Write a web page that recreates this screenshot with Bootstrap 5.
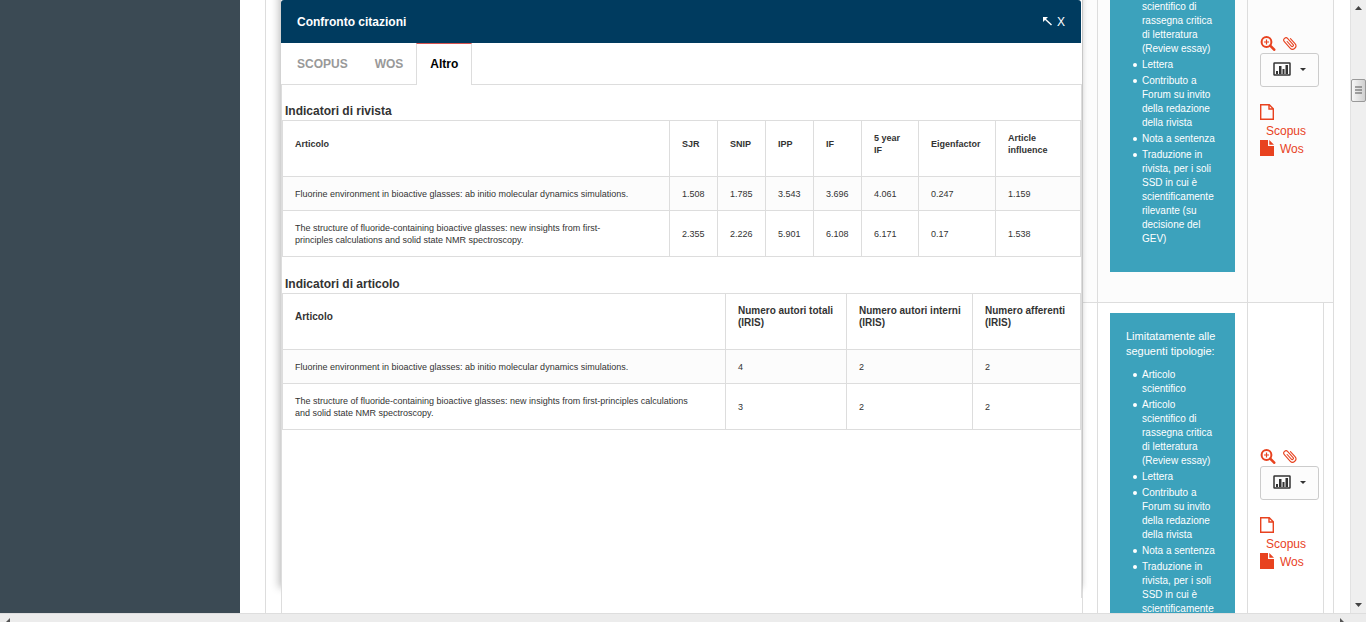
<!DOCTYPE html>
<html lang="it">
<head>
<meta charset="utf-8">
<meta name="viewport" content="width=device-width, initial-scale=1">
<title>Confronto citazioni</title>
<link href="https://cdn.jsdelivr.net/npm/bootstrap@5.3.0/dist/css/bootstrap.min.css" rel="stylesheet">
<script src="https://cdn.jsdelivr.net/npm/bootstrap@5.3.0/dist/js/bootstrap.bundle.min.js"></script>
<style>
  body { font-family: "Liberation Sans", Arial, sans-serif; font-size: 12px; line-height: 18px; color: #333; background: #fff; }
  .side-panel { width: 240px; background: #3b4a54; }
  .page-main { padding: 0 16px 0 25px; }

  /* results grid behind the dialog */
  .result { background: #fff; }
  .result > div { border-left: 1px solid #ddd; flex: none; }
  .result .c-check { width: 16px; }
  .result .c-item { flex: 1 1 0; }
  .result .c-gap { width: 15px; }
  .result .c-notes { width: 150px; padding: 10px 12px 0; }
  .result .c-actions { width: 87px; border-right: 1px solid #ddd; padding-left: 12px; }
  .result-first { height: 303px; }
  .result-first .c-gap, .result-first .c-notes, .result-first .c-actions { background: #fcfcfc; border-bottom: 1px solid #ddd; }
  .result-first .c-notes { padding: 0 12px 30px; }
  .result-first .c-actions { padding-top: 34px; }
  .result-next .c-actions { padding-right: 9px; }
  .result-next .inner { border-right: 1px solid #ddd; padding-top: 144px; }

  .note-box { background: #3ca2bc; color: #fff; font-size: 10px; line-height: 14px; padding: 16px; }
  .note-box p { margin: 0 -8px 9px 0; font-size: 11px; line-height: 15px; }
  .note-box ul { margin: 0; padding-left: 16px; list-style: none; }
  .note-box li { position: relative; margin-bottom: 2px; white-space: nowrap; }
  .note-box li:not(.continued)::before { content: ""; position: absolute; left: -9px; top: 5px; width: 4px; height: 4px; border-radius: 50%; background: #fff; }
  .result-first .note-box { padding-top: 0; padding-bottom: 24px; }

  .red-link { color: #e8421f; text-decoration: none; }
  .tool-icons { height: 18px; gap: 7px; margin-bottom: 1px; }
  .btn-chart { width: 59px; height: 34px; border: 1px solid #ccc; border-radius: 3px; background: #fcfcfc; color: #333; padding: 0 0 2px; gap: 9px; margin-bottom: 17px; }
  .ico { display: block; }
  .file-line { height: 18px; }
  .scopus-text { padding-left: 6px; }
  .wos-link { gap: 6px; }

  /* dialog */
  .cmp-dialog { top: 0; bottom: 15px; left: 41px; right: 268px; background: #fff; box-shadow: -3px -10px 8px rgba(0,0,0,.2), 1px -10px 6px rgba(0,0,0,.1); }
  .cmp-head { height: 43px; background: #003b5f; color: #fff; padding: 0 16px; margin-right: 1px; border-radius: 3px 3px 0 0; font-weight: bold; line-height: 16px; }
  .cmp-head button { background: none; border: 0; padding: 0; color: #fff; }
  .cmp-tabs { height: 42px; border-bottom: 1px solid #ddd; padding-left: 2px; margin: 0; }
  .cmp-tabs a { display: block; height: 42px; padding: 12px 13px 0 14px; font-weight: bold; color: #999; text-decoration: none; }
  .cmp-tabs a.active { border: 1px solid #ddd; border-top-color: #d9534f; border-bottom: 0; padding: 11px 13px 0; color: #000; background: #fff; }
  .cmp-body { border: solid #ddd; border-width: 0 1px; padding-top: 17px; height: calc(100% - 85px); }
  .cmp-body h2 { font-size: 12px; line-height: 18px; font-weight: bold; margin: 0; padding-left: 3px; }
  .metrics { width: 100%; table-layout: fixed; border-collapse: collapse; margin-bottom: 17px; font-size: 9px; line-height: 12px; }
  .metrics th, .metrics td { border: 1px solid #ddd; padding: 11px 11px 10px 12px; vertical-align: middle; }
  .metrics th { padding: 11px 0 20px 12px; }
  .metrics tbody tr:first-child { background: #fcfcfc; }
  .journal-metrics { margin-bottom: 18px; }
  .article-metrics th { font-size: 10px; line-height: 12px; }
  .w48 { width: 48px; } .w57 { width: 57px; } .w77 { width: 77px; } .w85 { width: 85px; }
  .w121 { width: 121px; } .w126 { width: 126px; } .w108 { width: 108px; }

  .v-bar { width: 16px; background: #efefef; border-left: 1px solid #e2e2e2; padding: 6px 0; }
  .v-thumb { width: 15px; height: 23px; top: 79px; left: 0; border: 1px solid #999; border-radius: 2px; background: linear-gradient(90deg,#f7f7f7,#cfcfcf); }
  .h-bar { height: 9px; background: #ececec; border-top: 1px solid #dedede; padding: 4px 22px 0 6px; }
</style>
</head>
<body>
<svg width="0" height="0" class="position-absolute" aria-hidden="true">
  <symbol id="zoom" viewBox="0 0 15 15"><circle cx="6" cy="6" r="4.9" fill="none" stroke="currentColor" stroke-width="2"/><path d="M6 3.5v5M3.5 6h5" stroke="currentColor" stroke-width="1.2"/><path d="M9.700 9.700l4 4" stroke="currentColor" stroke-width="2.600" stroke-linecap="round"/></symbol>
  <symbol id="clip" viewBox="0 0 14 14"><path d="M10.300 4v6.800a3.300 3.300 0 0 1-6.600 0V2.200a2.300 2.300 0 0 1 4.600 0v8a1.200 1.200 0 0 1-2.400 0V4" transform="rotate(-42 7 7)" fill="none" stroke="currentColor" stroke-width="1.100" stroke-linecap="round"/></symbol>
  <symbol id="chart" viewBox="0 0 18 14"><rect x="1" y="1" width="16" height="12" rx=".5" fill="none" stroke="currentColor" stroke-width="1.500"/><path d="M3 9h2v3H3zM6 4h2.500v8H6zM9.500 7h2v5h-2zM12.500 3H15v9h-2.500z" fill="currentColor"/></symbol>
  <symbol id="file-o" viewBox="0 0 14 16"><path d="M.7.7h8.600l4 4v10.600H.7zM9 1v4h4" fill="none" stroke="currentColor" stroke-width="1.400"/></symbol>
  <symbol id="file" viewBox="0 0 14 16"><path d="M0 0h8v6h6v10H0zM9.300 0L14 4.700H9.300z" fill="currentColor"/></symbol>
</svg>

<div class="d-flex flex-column vh-100 overflow-hidden">
  <div class="d-flex flex-fill overflow-hidden">
    <aside class="side-panel flex-shrink-0"></aside>

    <main class="page-main position-relative flex-fill overflow-hidden d-flex flex-column">
      <section class="result result-first d-flex flex-shrink-0">
        <div class="c-check"></div><div class="c-item"></div><div class="c-gap"></div>
        <div class="c-notes d-flex flex-column">
          <div class="note-box flex-fill d-flex flex-column justify-content-end">
            <ul>
              <li class="continued">scientifico di<br>rassegna critica<br>di letteratura<br>(Review essay)</li>
              <li>Lettera</li>
              <li>Contributo a<br>Forum su invito<br>della redazione<br>della rivista</li>
              <li>Nota a sentenza</li>
              <li>Traduzione in<br>rivista, per i soli<br>SSD in cui è<br>scientificamente<br>rilevante (su<br>decisione del<br>GEV)</li>
            </ul>
          </div>
        </div>
        <div class="c-actions">
          <div class="tool-icons d-flex align-items-center">
            <a href="#" class="red-link" aria-label="Dettagli"><svg class="ico" width="16" height="15"><use href="#zoom"/></svg></a>
            <a href="#" class="red-link" aria-label="Allegati"><svg class="ico" width="14" height="14"><use href="#clip"/></svg></a>
          </div>
          <button type="button" class="btn-chart d-flex align-items-center justify-content-center" aria-label="Statistiche"><svg width="18" height="14"><use href="#chart"/></svg><svg width="6" height="3"><path d="M0 0h6L3 3z" fill="currentColor"/></svg></button>
          <a href="#" class="red-link d-block"><span class="file-line d-block"><svg class="ico" width="14" height="16"><use href="#file-o"/></svg></span><span class="scopus-text d-block">Scopus</span></a>
          <a href="#" class="red-link wos-link d-flex"><svg width="14" height="16"><use href="#file"/></svg><span>Wos</span></a>
        </div>
      </section>

      <section class="result result-next d-flex flex-fill">
        <div class="c-check"></div><div class="c-item"></div><div class="c-gap"></div>
        <div class="c-notes">
          <div class="note-box">
            <p>Limitatamente alle<br>seguenti tipologie:</p>
            <ul>
              <li>Articolo<br>scientifico</li>
              <li>Articolo<br>scientifico di<br>rassegna critica<br>di letteratura<br>(Review essay)</li>
              <li>Lettera</li>
              <li>Contributo a<br>Forum su invito<br>della redazione<br>della rivista</li>
              <li>Nota a sentenza</li>
              <li>Traduzione in<br>rivista, per i soli<br>SSD in cui è<br>scientificamente</li>
            </ul>
          </div>
        </div>
        <div class="c-actions">
          <div class="inner h-100">
            <div class="tool-icons d-flex align-items-center">
              <a href="#" class="red-link" aria-label="Dettagli"><svg class="ico" width="16" height="15"><use href="#zoom"/></svg></a>
              <a href="#" class="red-link" aria-label="Allegati"><svg class="ico" width="14" height="14"><use href="#clip"/></svg></a>
            </div>
            <button type="button" class="btn-chart d-flex align-items-center justify-content-center" aria-label="Statistiche"><svg width="18" height="14"><use href="#chart"/></svg><svg width="6" height="3"><path d="M0 0h6L3 3z" fill="currentColor"/></svg></button>
            <a href="#" class="red-link d-block"><span class="file-line d-block"><svg class="ico" width="14" height="16"><use href="#file-o"/></svg></span><span class="scopus-text d-block">Scopus</span></a>
            <a href="#" class="red-link wos-link d-flex"><svg width="14" height="16"><use href="#file"/></svg><span>Wos</span></a>
          </div>
        </div>
      </section>

      <div class="cmp-dialog position-absolute" role="dialog" aria-labelledby="cmp-title">
        <header class="cmp-head d-flex align-items-center justify-content-between">
          <span id="cmp-title">Confronto citazioni</span>
          <span class="d-flex align-items-center gap-1">
            <button type="button" aria-label="Riduci"><svg class="ico" width="11" height="11" viewBox="0 0 11 11"><path d="M1 1h5L1 6z" fill="currentColor"/><path d="M2 2l7.500 7" fill="none" stroke="currentColor" stroke-width="1.400"/></svg></button>
            <button type="button">X</button>
          </span>
        </header>
        <ul class="cmp-tabs d-flex list-unstyled">
          <li><a href="#">SCOPUS</a></li>
          <li><a href="#">WOS</a></li>
          <li><a href="#" class="active">Altro</a></li>
        </ul>
        <div class="cmp-body">
          <h2>Indicatori di rivista</h2>
          <table class="metrics journal-metrics">
            <colgroup><col><col class="w48"><col class="w48"><col class="w48"><col class="w48"><col class="w57"><col class="w77"><col class="w85"></colgroup>
            <thead><tr><th>Articolo</th><th>SJR</th><th>SNIP</th><th>IPP</th><th>IF</th><th>5 year<br>IF</th><th>Eigenfactor</th><th>Article<br>influence</th></tr></thead>
            <tbody>
              <tr><td>Fluorine environment in bioactive glasses: ab initio molecular dynamics simulations.</td><td>1.508</td><td>1.785</td><td>3.543</td><td>3.696</td><td>4.061</td><td>0.247</td><td>1.159</td></tr>
              <tr><td>The structure of fluoride-containing bioactive glasses: new insights from first-<br>principles calculations and solid state NMR spectroscopy.</td><td>2.355</td><td>2.226</td><td>5.901</td><td>6.108</td><td>6.171</td><td>0.17</td><td>1.538</td></tr>
            </tbody>
          </table>
          <h2>Indicatori di articolo</h2>
          <table class="metrics article-metrics">
            <colgroup><col><col class="w121"><col class="w126"><col class="w108"></colgroup>
            <thead><tr><th>Articolo</th><th>Numero autori totali<br>(IRIS)</th><th>Numero autori interni<br>(IRIS)</th><th>Numero afferenti<br>(IRIS)</th></tr></thead>
            <tbody>
              <tr><td>Fluorine environment in bioactive glasses: ab initio molecular dynamics simulations.</td><td>4</td><td>2</td><td>2</td></tr>
              <tr><td>The structure of fluoride-containing bioactive glasses: new insights from first-principles calculations<br>and solid state NMR spectroscopy.</td><td>3</td><td>2</td><td>2</td></tr>
            </tbody>
          </table>
        </div>
      </div>
    </main>

    <div class="v-bar position-relative flex-shrink-0 d-flex flex-column align-items-center justify-content-between">
      <svg width="7" height="4"><path d="M0 4L3.500 0 7 4z" fill="#444"/></svg>
      <div class="v-thumb position-absolute d-flex align-items-center justify-content-center"><svg width="7" height="9"><path d="M0 1h7M0 4h7M0 7h7" stroke="#555" stroke-width="1.200"/></svg></div>
      <svg width="7" height="4"><path d="M0 0h7L3.500 4z" fill="#444"/></svg>
    </div>
  </div>
  <div class="h-bar d-flex justify-content-between flex-shrink-0">
    <svg width="4" height="4"><path d="M0 4L4 0v4z" fill="#555"/></svg>
    <svg width="4" height="4"><path d="M0 0l4 4H0z" fill="#555"/></svg>
  </div>
</div>
</body>
</html>
